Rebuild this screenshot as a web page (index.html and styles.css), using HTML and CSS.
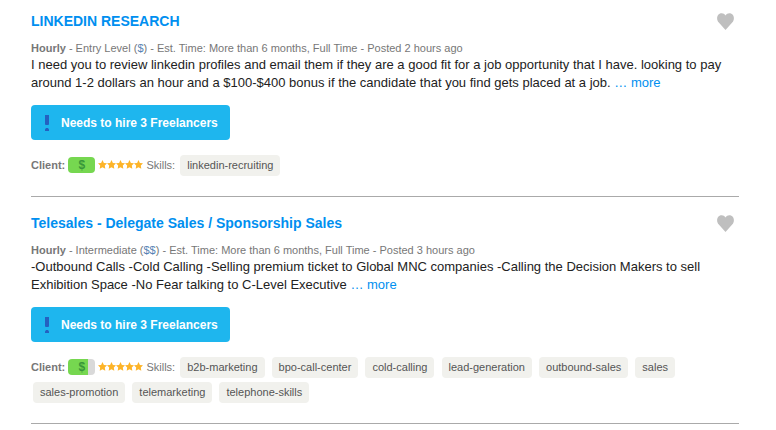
FILE: index.html
```
<!DOCTYPE html>
<html lang="en">
<head>
<meta charset="utf-8">
<title>Job feed</title>
<link rel="stylesheet" href="styles.css">
</head>
<body>
<svg class="defs" aria-hidden="true">
  <symbol id="heart" viewBox="0 0 17 17"><path d="M8.5 17 L1.8 9.6 C-.4 7 -.4 3.400 1.500 1.500 C3.500 -.5 6.900 -.4 8.500 2.500 C10.100 -.4 13.500 -.5 15.500 1.500 C17.400 3.400 17.400 7 15.200 9.600 Z"/></symbol>
  <symbol id="stars" viewBox="0 0 45 9">
    <path id="star" d="M4.500 0 L5.900 2.900 L9 3.300 L6.800 5.500 L7.300 8.700 L4.500 7.200 L1.700 8.700 L2.200 5.500 L0 3.300 L3.100 2.900 Z"/>
    <use href="#star" x="9"/><use href="#star" x="18"/><use href="#star" x="27"/><use href="#star" x="36"/>
  </symbol>
  <symbol id="alert" viewBox="0 0 4 17"><path d="M0 1H4V10L3.500 11H.5L0 10ZM0 17V15.500L1 14H3L4 15.500V17Z"/></symbol>
</svg>
<main class="feed">
  <article class="job">
    <header class="job-head">
      <h2 class="title"><a href="#">LINKEDIN RESEARCH</a></h2>
      <button class="save" type="button" aria-label="Save job"><svg><use href="#heart"/></svg></button>
    </header>
    <p class="meta"><strong>Hourly</strong> - Entry Level (<span class="tier">$</span>) - Est. Time: More than 6 months, Full Time - Posted 2 hours ago</p>
    <p class="description">I need you to review linkedin profiles and email them if they are a good fit for a job opportunity that I have. looking to pay around 1-2 dollars an hour and a $100-$400 bonus if the candidate that you find gets placed at a job. <a href="#">… more</a></p>
    <div class="notice"><svg><use href="#alert"/></svg>Needs to hire 3 Freelancers</div>
    <div class="details"><strong>Client:</strong> <span class="spend">$</span> <svg class="stars" role="img" aria-label="5 stars"><use href="#stars"/></svg> Skills: <a class="tag" href="#">linkedin-recruiting</a></div>
  </article>
  <article class="job">
    <header class="job-head">
      <h2 class="title"><a href="#">Telesales - Delegate Sales / Sponsorship Sales</a></h2>
      <button class="save" type="button" aria-label="Save job"><svg><use href="#heart"/></svg></button>
    </header>
    <p class="meta"><strong>Hourly</strong> - Intermediate (<span class="tier">$$</span>) - Est. Time: More than 6 months, Full Time - Posted 3 hours ago</p>
    <p class="description">-Outbound Calls -Cold Calling -Selling premium ticket to Global MNC companies -Calling the Decision Makers to sell Exhibition Space -No Fear talking to C-Level Executive <a href="#">… more</a></p>
    <div class="notice"><svg><use href="#alert"/></svg>Needs to hire 3 Freelancers</div>
    <div class="details"><strong>Client:</strong> <span class="spend spend-partial">$</span> <svg class="stars" role="img" aria-label="5 stars"><use href="#stars"/></svg> Skills: <a class="tag" href="#">b2b-marketing</a> <a class="tag" href="#">bpo-call-center</a> <a class="tag" href="#">cold-calling</a> <a class="tag" href="#">lead-generation</a> <a class="tag" href="#">outbound-sales</a> <a class="tag" href="#">sales</a> <a class="tag" href="#">sales-promotion</a> <a class="tag" href="#">telemarketing</a> <a class="tag" href="#">telephone-skills</a></div>
  </article>
</main>
</body>
</html>
```

FILE: styles.css
```
* {
  box-sizing: border-box;
}

body {
  margin: 0;
  background: #fff;
  color: #222;
  font: 13px/18px "Liberation Sans", Arial, sans-serif;
}

a {
  color: #008ff0;
  text-decoration: none;
}

.defs {
  position: absolute;
  width: 0;
  height: 0;
}

.feed {
  padding: 11px 37px 0 31px;
}

.job {
  padding-bottom: 18px;
  border-bottom: 1px solid #aaa;
}

.job + .job {
  padding-top: 16px;
}

.job-head {
  display: flex;
  justify-content: space-between;
  align-items: center;
  height: 20px;
  margin-bottom: 9px;
}

.title {
  margin: 0;
  font-size: 14px;
  line-height: 20px;
}

.save {
  padding: 0;
  margin-right: 5px;
  border: 0;
  background: none;
  cursor: pointer;
}

.save svg {
  display: block;
  width: 17px;
  height: 17px;
  fill: #bfbfbf;
}

.meta {
  margin: 0;
  color: #777;
  font-size: 11px;
  line-height: 16px;
}

.tier {
  color: #5583b5;
}

.description {
  margin: 0 0 13px;
}

.notice {
  display: flex;
  align-items: center;
  gap: 12px;
  width: fit-content;
  height: 35px;
  margin-bottom: 13px;
  padding: 0 12px 0 14px;
  border-radius: 4px;
  background: #1eb6ee;
  color: #fff;
  font-size: 12px;
  font-weight: bold;
}

.notice svg {
  width: 4px;
  height: 17px;
  fill: #2461c0;
}

.details {
  color: #777;
  font-size: 11px;
  line-height: 25px;
}

.spend {
  display: inline-block;
  width: 27px;
  border-radius: 4px;
  background: #76d750;
  color: #38963a;
  font-size: 12px;
  font-weight: bold;
  line-height: 16px;
  text-align: center;
}

.spend-partial {
  background: linear-gradient(to right, #76d750 20px, #d9d9d9 20px);
}

.stars {
  width: 45px;
  height: 9px;
  fill: #fdb428;
}

.tag {
  display: inline-block;
  margin: 2px;
  padding: 0 7px;
  border-radius: 4px;
  background: #f1f1ed;
  color: #555;
  line-height: 21px;
}
```
